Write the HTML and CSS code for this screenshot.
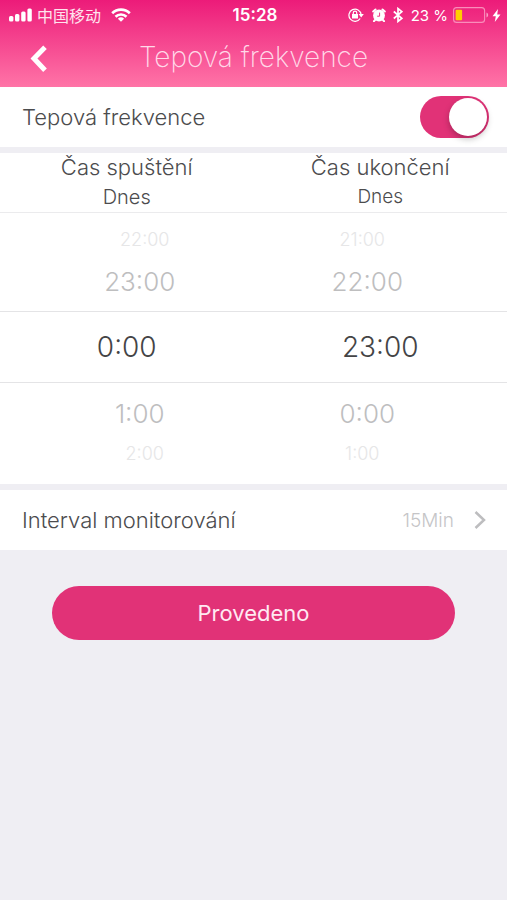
FILE: index.html
```html
<!DOCTYPE html>
<html lang="cs">
<head>
<meta charset="utf-8">
<meta name="viewport" content="width=device-width, initial-scale=1">
<title>Tepová frekvence</title>
<link rel="stylesheet" href="styles.css">
</head>
<body>
<header class="header">
  <div class="status">
    <div class="status-side">
      <svg class="signal" width="24" height="14" viewBox="0 0 24 14" fill="#fff" aria-hidden="true">
        <rect x="0" y="8" width="4.400" height="5.500" rx="1.500"/><rect x="6" y="6" width="4.400" height="7.500" rx="1.500"/><rect x="12.200" y="3.500" width="4.400" height="10" rx="1.500"/><rect x="18.400" y="0.500" width="4.400" height="13" rx="1.500"/>
      </svg>
      <span class="carrier">中国移动</span>
      <svg class="wifi" width="20" height="14" viewBox="0 0 20 14" fill="none" stroke="#fff" stroke-width="2.700" aria-hidden="true">
        <path d="M1.200 5.200a12.700 12.700 0 0 1 17.600 0M4.500 8.700a8 8 0 0 1 11 0"/><path d="M10 13.700 6.900 10.700a4.500 4.500 0 0 1 6.200 0z" fill="#fff" stroke="none"/>
      </svg>
    </div>
    <time class="clock">15:28</time>
    <div class="status-side status-right">
      <svg width="16" height="14" viewBox="0 0 16 14" fill="none" stroke="#fff" stroke-width="1.200" aria-hidden="true">
        <path d="M12.200 10.500A6.100 6.100 0 1 1 13.100 6.500"/><path d="M10.600 6h5.200l-2.600 3.400z" fill="#fff" stroke="none"/><rect x="4" y="6" width="6" height="4.500" fill="#fff" stroke="none"/><path d="M5.300 6V4.800a1.700 1.700 0 0 1 3.400 0V6"/>
      </svg>
      <svg class="alarm" width="14" height="14" viewBox="0 0 14 14" aria-hidden="true">
        <circle cx="7" cy="7.500" r="5.900" fill="#fff"/><path d="M1.200 3.500 3.500 1.500M12.800 3.500l-2.300-2M3 12l-1 1.200M11 12l1 1.200" stroke="#fff" stroke-width="2" stroke-linecap="round"/><path d="M7.600 4.600v3.600H5.200" fill="none" stroke="#ee3484" stroke-width="1"/>
      </svg>
      <svg class="bluetooth" width="10" height="16" viewBox="0 0 10 16" fill="none" stroke="#fff" stroke-width="1.700" aria-hidden="true">
        <path d="M.8 4.500 8.800 11.300 5 14.400V1.600l3.800 3.100-8 6.800"/>
      </svg>
      <span class="percent">23 %</span>
      <svg width="36" height="16" viewBox="0 0 36 16" aria-hidden="true">
        <rect x=".6" y=".6" width="31" height="14.800" rx="3" fill="none" stroke="#f98dba" stroke-width="1.100"/><rect x="2.600" y="2.700" width="6.500" height="10.600" rx="1" fill="#ffcf00"/><path d="M33.500 5.500a2.700 2.700 0 0 1 0 5z" fill="#f9a3c6"/>
      </svg>
      <svg class="bolt" width="9" height="13" viewBox="0 0 9 13" aria-hidden="true"><path d="M6 0 .5 7.300h3.300L2.800 13l5.700-7.600H5.200z" fill="#fff"/></svg>
    </div>
  </div>
  <nav class="nav">
    <button class="back" type="button" aria-label="Zpět">
      <svg width="18" height="28" viewBox="0 0 18 28" fill="none" stroke="#fff" stroke-width="5" aria-hidden="true"><path d="M15 2.300 4 13.500 15 25.200"/></svg>
    </button>
    <h1 class="title">Tepová frekvence</h1>
  </nav>
</header>
<main class="content">
  <div class="row">
    <label for="monitor">Tepová frekvence</label>
    <input class="switch" id="monitor" type="checkbox" role="switch" checked>
  </div>
  <section class="picker">
    <div class="picker-head">
      <div><h2 class="picker-label">Čas spuštění</h2><p class="day">Dnes</p></div>
      <div><h2 class="picker-label">Čas ukončení</h2><p class="day day-end">Dnes</p></div>
    </div>
    <div class="wheel">
      <div class="line far"><button type="button">22:00</button><button type="button">21:00</button></div>
      <div class="line near"><button type="button">23:00</button><button type="button">22:00</button></div>
      <div class="line selected"><button type="button">0:00</button><button type="button">23:00</button></div>
      <div class="line near"><button type="button">1:00</button><button type="button">0:00</button></div>
      <div class="line far"><button type="button">2:00</button><button type="button">1:00</button></div>
    </div>
  </section>
  <a class="row" href="#interval">
    <span>Interval monitorování</span>
    <span class="interval">15Min
      <svg width="12" height="20" viewBox="0 0 12 20" fill="none" stroke="#bdbdbf" stroke-width="2.500" aria-hidden="true"><path d="M1.500 2 10 10l-8.500 8"/></svg>
    </span>
  </a>
  <button class="done" type="button">Provedeno</button>
</main>
</body>
</html>
```
FILE: styles.css
```css
* { box-sizing: border-box; }
body {
  margin: 0;
  min-height: 100vh;
  background: #efeef3;
  color: #4c4c4e;
  font-family: Inter, "Noto Sans CJK SC", sans-serif;
  font-weight: 300;
}
h1, h2, p { margin: 0; font-weight: 300; }
button { padding: 0; border: 0; background: none; color: inherit; font: inherit; }
svg { display: block; flex: none; }

.header { background: linear-gradient(#ec1b79, #ff74a7); color: #fff; }
.status {
  display: grid;
  grid-template-columns: 1fr auto 1fr;
  align-items: center;
  height: 30px;
  padding: 0 6px 0 9px;
}
.status-side { display: flex; align-items: center; }
.status-right { justify-content: flex-end; }
.carrier { margin: 0 10px 0 4px; color: #ffe3ee; font: 400 16px "Noto Sans CJK SC", sans-serif; line-height: 20px; }
.clock { font-size: 17px; font-weight: 600; }
.alarm { margin: 0 7px 0 8px; }
.percent { margin: 0 5px 0 8px; font-size: 15px; font-weight: 400; white-space: nowrap; }
.bolt { margin-left: 3px; }

.nav {
  display: grid;
  grid-template-columns: 48px 1fr 48px;
  align-items: center;
  height: 57px;
}
.back { justify-self: end; }
.title { color: #ffd9e8; font-size: 28px; font-weight: 200; line-height: 36px; padding-bottom: 4px; text-align: center; }

.content { display: flex; flex-direction: column; gap: 6px; }
.row {
  display: flex;
  align-items: center;
  justify-content: space-between;
  height: 60px;
  padding: 0 18px 0 22px;
  background: #fff;
  color: inherit;
  font-size: 22px;
  text-decoration: none;
}
.switch {
  appearance: none;
  width: 69px;
  height: 42px;
  margin: 0;
  padding: 2px;
  border-radius: 21px;
  background: #e13277;
}
.switch::before {
  content: "";
  display: block;
  width: 38px;
  height: 38px;
  margin-left: auto;
  border-radius: 50%;
  background: #fff;
  box-shadow: 0 3px 6px rgba(0, 0, 0, .25);
}
.switch:not(:checked) { background: #d8d8dc; }
.switch:not(:checked)::before { margin-left: 0; }

.picker { background: #fff; }
.picker-head {
  display: grid;
  grid-template-columns: 1fr 1fr;
  height: 60px;
  border-bottom: 1px solid #ebebed;
  text-align: center;
}
.picker-label { font-size: 22px; line-height: 29px; }
.day { font-size: 20px; line-height: 30px; }
.day-end { font-size: 19px; }
.wheel { padding: 16px 0 19px; }
.line { display: grid; grid-template-columns: 1fr 1fr; align-items: center; }
.far { height: 22px; padding: 0 36px; color: #e6e6e7; font-size: 18px; line-height: 22px; }
.near { height: 60px; padding: 0 26px; color: #bebebf; font-size: 26px; }
.selected {
  height: 72px;
  border: solid #e4e4e6;
  border-width: 1px 0;
  color: #444446;
  font-size: 28px;
}

.interval { display: flex; align-items: center; gap: 20px; padding-right: 3px; color: #c5c5c7; font-size: 19px; }
.done {
  height: 54px;
  margin: 30px 52px 0;
  border-radius: 27px;
  background: #e13277;
  color: #ffe9f2;
  font-size: 22px;
  font-weight: 400;
}
```
